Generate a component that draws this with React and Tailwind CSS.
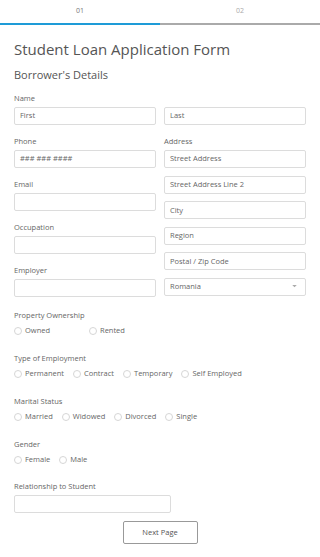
const TextInput = ({ placeholder = '', className = '' }) => (
  <div
    className={`h-[18px] border border-[#dcdcdc] rounded-[2px] bg-white px-[5px] flex items-center text-[7.5px] text-[#666] ${className}`}
  >
    {placeholder}
  </div>
);

const Label = ({ children, className = '' }) => (
  <div className={`text-[7.5px] leading-[10px] text-[#666] ${className}`}>{children}</div>
);

const Radio = ({ label, className = '' }) => (
  <div className={`flex items-center gap-[3px] ${className}`}>
    <span className="w-[8px] h-[8px] rounded-full border border-[#d6d6d6] bg-white" />
    <span className="text-[7.5px] text-[#666]">{label}</span>
  </div>
);

const RadioGroup = ({ title, options, widths }) => (
  <div>
    <Label>{title}</Label>
    <div className="flex items-center gap-[9px] mt-[6px] h-[10px]">
      {options.map((o, i) => (
        <Radio key={o} label={o} className={widths ? widths[i] : ''} />
      ))}
    </div>
  </div>
);

export default function App() {
  return (
    <div
      className="w-[320px] min-h-[557px] bg-white"
      style={{ fontFamily: '"Open Sans", "Noto Sans", sans-serif' }}
    >
      {/* Tabs */}
      <div className="flex">
        <div className="flex-1 h-[25px] flex items-center justify-center border-b-2 border-[#1e9bd7] text-[7px] text-[#777]">
          01
        </div>
        <div className="flex-1 h-[25px] flex items-center justify-center border-b-2 border-[#aaaaaa] text-[7px] text-[#aaa]">
          02
        </div>
      </div>

      <div className="px-[14px]">
        <h1 className="text-[15px] leading-[20px] text-[#555] mt-[14px]">Student Loan Application Form</h1>
        <h2 className="text-[11px] leading-[14px] text-[#555] mt-[9px]">Borrower's Details</h2>

        <div className="grid grid-cols-2 gap-x-[8px] mt-[11px]">
          {/* Left column */}
          <div>
            <Label>Name</Label>
            <TextInput placeholder="First" className="mt-[4px]" />
            <Label className="mt-[11px]">Phone</Label>
            <TextInput placeholder="### ### ####" className="mt-[4px]" />
            <Label className="mt-[11px]">Email</Label>
            <TextInput className="mt-[4px]" />
            <Label className="mt-[11px]">Occupation</Label>
            <TextInput className="mt-[4px]" />
            <Label className="mt-[11px]">Employer</Label>
            <TextInput className="mt-[4px]" />
          </div>

          {/* Right column */}
          <div>
            <div className="h-[10px]" />
            <TextInput placeholder="Last" className="mt-[4px]" />
            <Label className="mt-[11px]">Address</Label>
            <div className="flex flex-col gap-[7.6px] mt-[4px]">
              <TextInput placeholder="Street Address" />
              <TextInput placeholder="Street Address Line 2" />
              <TextInput placeholder="City" />
              <TextInput placeholder="Region" />
              <TextInput placeholder="Postal / Zip Code" />
              <div className="h-[18px] border border-[#dcdcdc] rounded-[2px] bg-white px-[5px] flex items-center justify-between text-[7.5px] text-[#666]">
                <span>Romania</span>
                <svg width="5" height="3" viewBox="0 0 6 4" className="mr-[3px]">
                  <path d="M0 0 L6 0 L3 3 Z" fill="#aaa" />
                </svg>
              </div>
            </div>
          </div>
        </div>

        <div className="flex flex-col gap-[17px] mt-[13px]">
          <RadioGroup
            title="Property Ownership"
            options={['Owned', 'Rented']}
            widths={['w-[66px]', '']}
          />
          <RadioGroup
            title="Type of Employment"
            options={['Permanent', 'Contract', 'Temporary', 'Self Employed']}
          />
          <RadioGroup title="Marital Status" options={['Married', 'Widowed', 'Divorced', 'Single']} />
          <RadioGroup title="Gender" options={['Female', 'Male']} />
        </div>

        <Label className="mt-[16px]">Relationship to Student</Label>
        <TextInput className="mt-[4px] w-[157px]" />

        <div className="flex justify-center mt-[8px] pb-[14px]">
          <button className="w-[75px] h-[23px] border border-[#999] rounded-[2px] bg-white text-[7.5px] text-[#555]">
            Next Page
          </button>
        </div>
      </div>
    </div>
  );
}
